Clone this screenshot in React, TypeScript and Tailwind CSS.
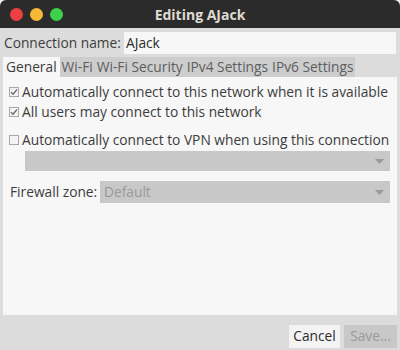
import React from 'react';

function Check({ checked }: { checked?: boolean }) {
  return (
    <span className="w-[10px] h-[10px] border border-[#a8a8a8] bg-[#f3f3f3] flex items-center justify-center shrink-0">
      {checked && (
        <svg width="8" height="8" viewBox="0 0 8 8">
          <path d="M1 4.2 L3 6.2 L7 1.5" fill="none" stroke="#6a6a6a" strokeWidth="1.3" />
        </svg>
      )}
    </span>
  );
}

function Arrow() {
  return (
    <svg width="9" height="5" viewBox="0 0 9 5">
      <path d="M0 0 L9 0 L4.5 5 Z" fill="#9a9a9a" />
    </svg>
  );
}

export default function App() {
  const font = { fontFamily: '"Open Sans", "Noto Sans", sans-serif' };
  return (
    <div className="w-[400px] h-[350px] bg-[#f3f3f3] text-[#3c3c3c] text-[13.75px] whitespace-nowrap" style={font}>
      <div className="w-full h-full bg-[#dcdcdc] rounded-t-[6px] overflow-hidden flex flex-col">
        <div className="h-[28px] bg-[#2b2b2b] flex items-center px-[10px] relative shrink-0">
          <div className="flex gap-[7px]">
            <span className="w-[13px] h-[13px] rounded-full bg-[#ee4040]" />
            <span className="w-[13px] h-[13px] rounded-full bg-[#f5b935]" />
            <span className="w-[13px] h-[13px] rounded-full bg-[#3ed04a]" />
          </div>
          <div className="absolute inset-0 flex items-center justify-center font-bold text-[#dfdbd2] text-[14px]">
            Editing AJack
          </div>
        </div>

        <div className="flex items-center h-[26px] mt-[2px] px-[4px]">
          <span className="w-[120px]">Connection name:</span>
          <div className="flex-1 h-[22px] bg-[#f7f7f7] flex items-center px-[2px] text-[#2c2c2c]">AJack</div>
        </div>

        <div className="flex px-[3px] mt-[1px] h-[20px] items-stretch">
          <div className="bg-[#f7f7f7] px-[3px] flex items-center">General</div>
          <div className="bg-[#cdcdcd] flex items-center gap-[4px] px-[2px] text-[#5e5e5e]">
            <span>Wi-Fi</span>
            <span>Wi-Fi Security</span>
            <span>IPv4 Settings</span>
            <span>IPv6 Settings</span>
          </div>
        </div>

        <div className="mx-[3px] h-[238px] bg-[#f7f7f7] flex flex-col px-[6px] pt-[5px]">
          <div className="flex items-center gap-[3px] h-[20px]">
            <Check checked />
            <span>Automatically connect to this network when it is available</span>
          </div>
          <div className="flex items-center gap-[3px] h-[20px]">
            <Check checked />
            <span>All users may connect to this network</span>
          </div>
          <div className="flex items-center gap-[3px] h-[20px] mt-[8px]">
            <Check />
            <span>Automatically connect to VPN when using this connection</span>
          </div>
          <div className="ml-[16px] mr-[1px] h-[20px] bg-[#c8c8c8] flex items-center justify-end pr-[6px] mt-[1px]">
            <Arrow />
          </div>
          <div className="flex items-center mt-[10px] h-[22px]">
            <span className="w-[91px] pl-[1px]">Firewall zone:</span>
            <div className="flex-1 mr-[1px] h-[22px] bg-[#c8c8c8] flex items-center justify-between px-[4px] pr-[6px] text-[#9a9a9a]">
              <span>Default</span>
              <Arrow />
            </div>
          </div>
        </div>

        <div className="flex justify-end gap-[4px] px-[3px] mt-[10px]">
          <div className="h-[23px] w-[51px] justify-center bg-[#f3f3f3] flex items-center text-[#2c2c2c]">Cancel</div>
          <div className="h-[23px] w-[53px] justify-center bg-[#c8c8c8] flex items-center text-[#9a9a9a]">Save...</div>
        </div>
      </div>
    </div>
  );
}
